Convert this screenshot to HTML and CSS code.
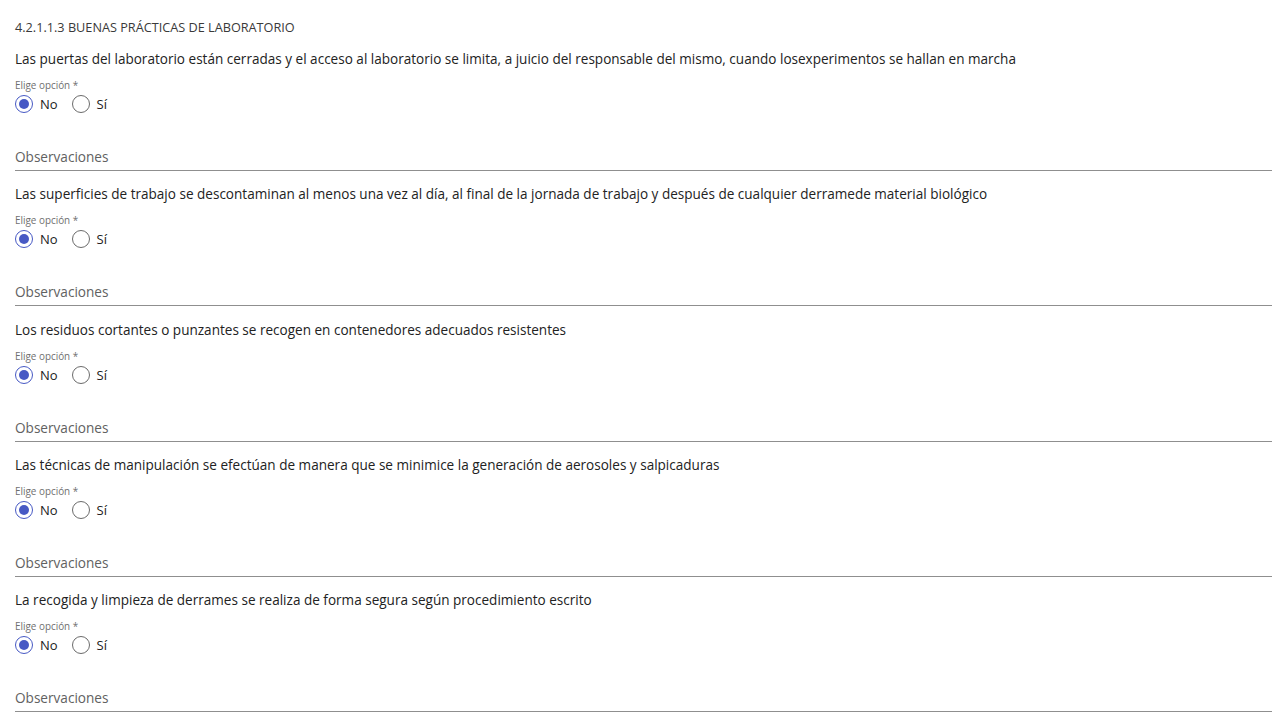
FILE: index.html
```html
<!DOCTYPE html>
<html lang="es">
<head>
<meta charset="utf-8">
<link rel="stylesheet" href="styles.css">
</head>
<body>
<div class="page">
  <div class="section-title">4.2.1.1.3 BUENAS PRÁCTICAS DE LABORATORIO</div>

  <div class="item">
    <div class="question">Las puertas del laboratorio están cerradas y el acceso al laboratorio se limita, a juicio del responsable del mismo, cuando losexperimentos se hallan en marcha</div>
    <div class="choice-label">Elige opción *</div>
    <div class="radios">
      <span class="radio checked"></span><span class="opt">No</span>
      <span class="radio"></span><span class="opt">Sí</span>
    </div>
    <div class="obs">Observaciones</div>
  </div>

  <div class="item">
    <div class="question">Las superficies de trabajo se descontaminan al menos una vez al día, al final de la jornada de trabajo y después de cualquier derramede material biológico</div>
    <div class="choice-label">Elige opción *</div>
    <div class="radios">
      <span class="radio checked"></span><span class="opt">No</span>
      <span class="radio"></span><span class="opt">Sí</span>
    </div>
    <div class="obs">Observaciones</div>
  </div>

  <div class="item">
    <div class="question">Los residuos cortantes o punzantes se recogen en contenedores adecuados resistentes</div>
    <div class="choice-label">Elige opción *</div>
    <div class="radios">
      <span class="radio checked"></span><span class="opt">No</span>
      <span class="radio"></span><span class="opt">Sí</span>
    </div>
    <div class="obs">Observaciones</div>
  </div>

  <div class="item">
    <div class="question">Las técnicas de manipulación se efectúan de manera que se minimice la generación de aerosoles y salpicaduras</div>
    <div class="choice-label">Elige opción *</div>
    <div class="radios">
      <span class="radio checked"></span><span class="opt">No</span>
      <span class="radio"></span><span class="opt">Sí</span>
    </div>
    <div class="obs">Observaciones</div>
  </div>

  <div class="item">
    <div class="question">La recogida y limpieza de derrames se realiza de forma segura según procedimiento escrito</div>
    <div class="choice-label">Elige opción *</div>
    <div class="radios">
      <span class="radio checked"></span><span class="opt">No</span>
      <span class="radio"></span><span class="opt">Sí</span>
    </div>
    <div class="obs">Observaciones</div>
  </div>
</div>
</body>
</html>
```

FILE: styles.css
```css
html, body {
  margin: 0;
  padding: 0;
  background: #ffffff;
}

body {
  font-family: "Open Sans", "Noto Sans", sans-serif;
  color: #212121;
}

.page {
  padding: 18px 10px 0 15px;
}

.section-title {
  font-size: 12.7px;
  line-height: 18px;
  color: #3a3a3a;
  margin-bottom: 13px;
}

.item {
  margin-bottom: 13.3px;
}

.question {
  font-size: 13.55px;
  line-height: 20px;
  color: #222222;
  white-space: nowrap;
}

.choice-label {
  margin-top: 10px;
  font-size: 9.9px;
  line-height: 12px;
  color: #6f6f6f;
}

.radios {
  margin-top: 3px;
  display: flex;
  align-items: center;
  height: 20px;
}

.radio {
  box-sizing: border-box;
  width: 18px;
  height: 18px;
  border: 1.5px solid #6b6b6b;
  border-radius: 50%;
  display: flex;
  align-items: center;
  justify-content: center;
}

.radio.checked {
  border-color: #4759c4;
}

.radio.checked::after {
  content: "";
  width: 10px;
  height: 10px;
  border-radius: 50%;
  background: #4759c4;
}

.opt {
  font-size: 13px;
  color: #222222;
  margin-left: 7px;
  margin-right: 14px;
}

.obs {
  margin-top: 34px;
  font-size: 13.6px;
  line-height: 18px;
  color: #616161;
  padding-bottom: 4px;
  border-bottom: 1px solid #8f8f8f;
}
```
